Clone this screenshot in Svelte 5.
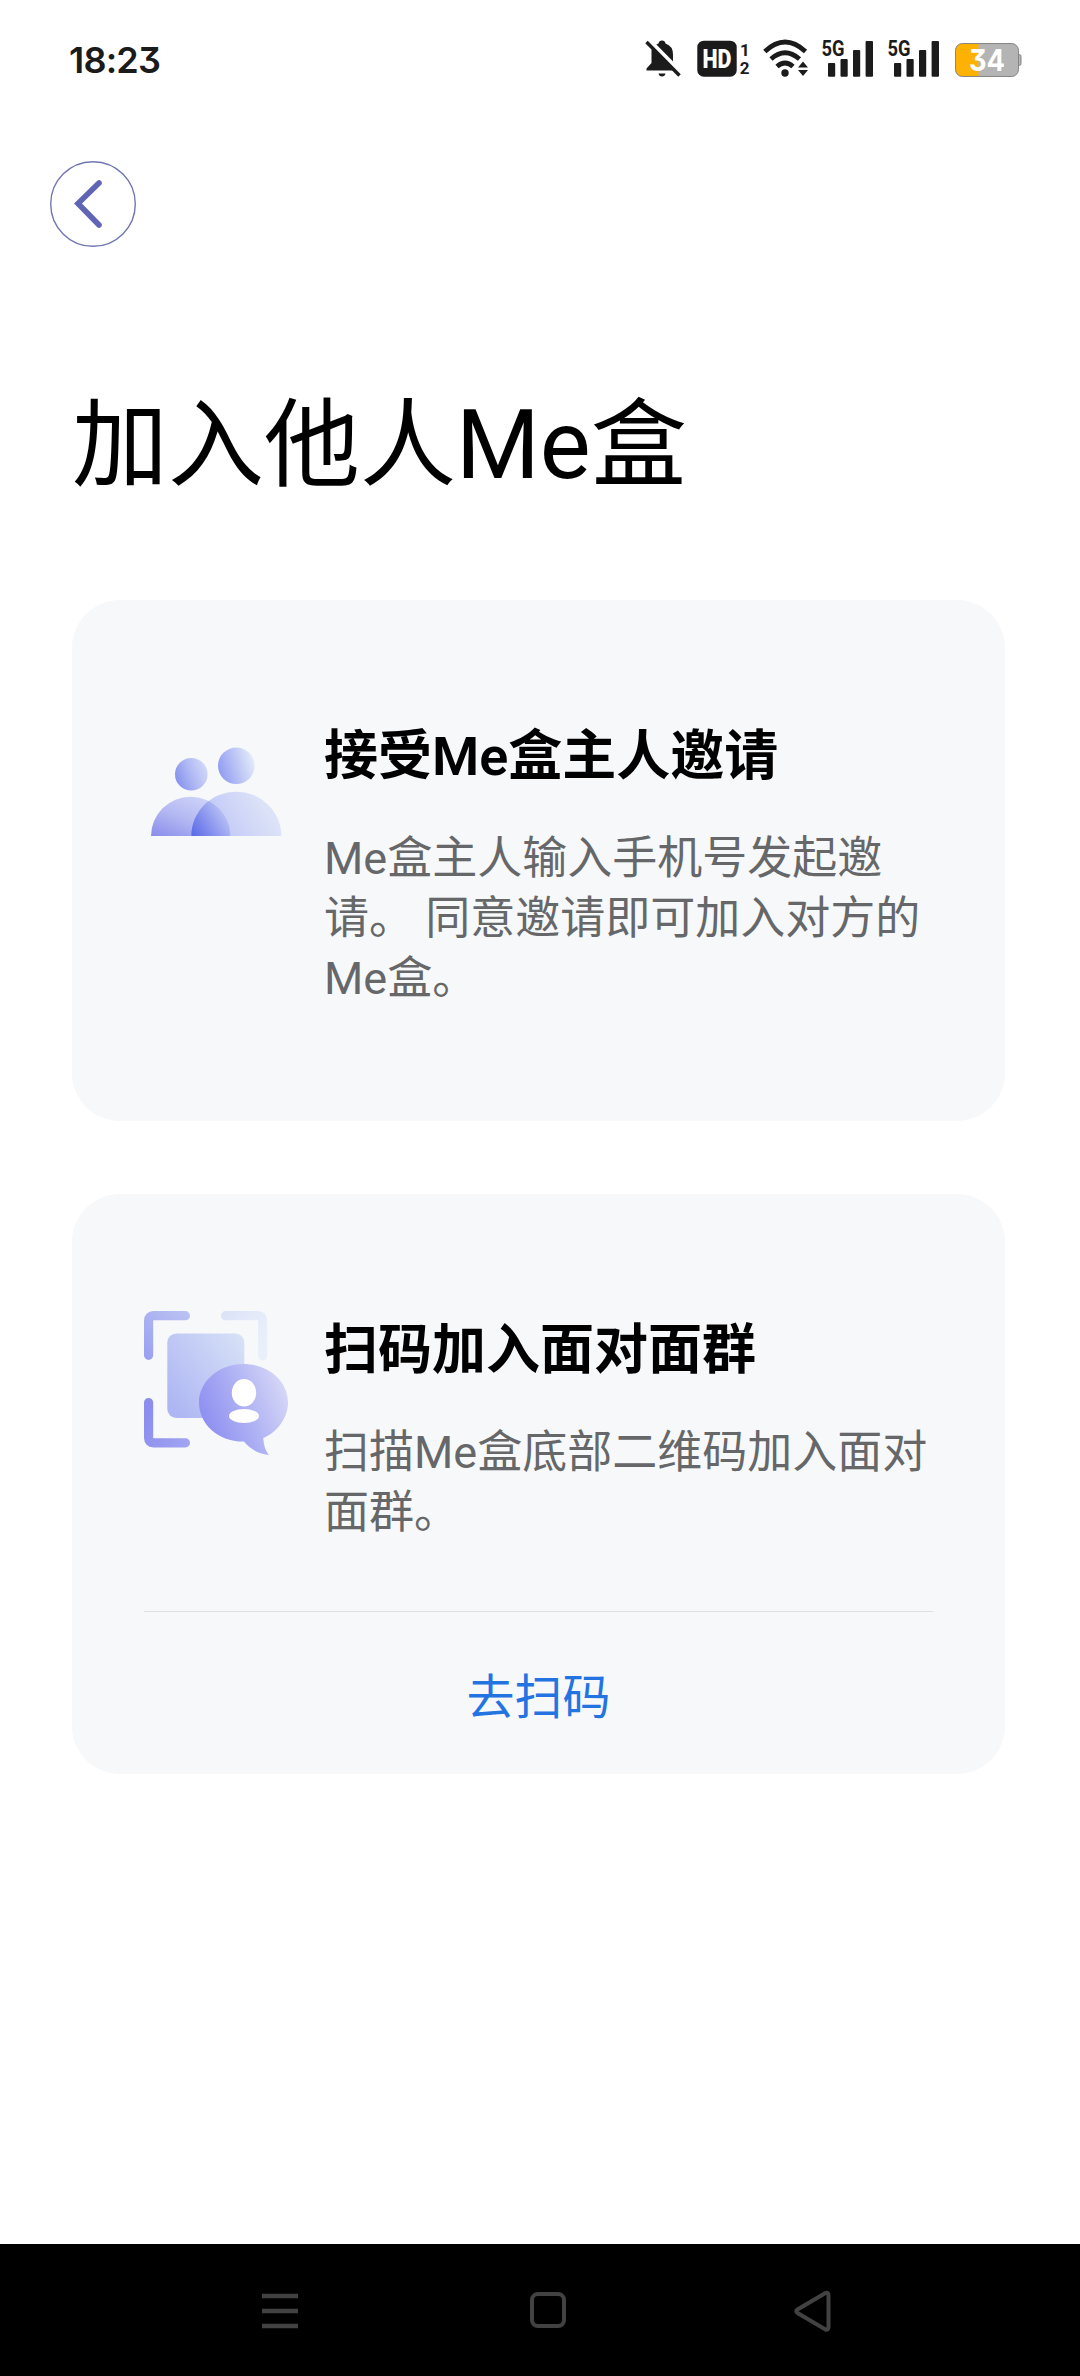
<script lang="ts">
	interface Card {
		icon: 'people' | 'scan';
		title: string;
		text: string;
		action?: string;
	}

	const cards: Card[] = [
		{
			icon: 'people',
			title: '接受Me盒主人邀请',
			text: 'Me盒主人输入手机号发起邀请。 同意邀请即可加入对方的Me盒。'
		},
		{
			icon: 'scan',
			title: '扫码加入面对面群',
			text: '扫描Me盒底部二维码加入面对面群。',
			action: '去扫码'
		}
	];
</script>

{#snippet signal()}
	<svg class="signal" width="52" height="40" viewBox="0 0 52 40">
		<text x="-0.5" y="16.8" textLength="23" lengthAdjust="spacingAndGlyphs">5G</text>
		<rect x="6" y="24" width="7.2" height="13.7" rx="1" />
		<rect x="18.5" y="20" width="7.2" height="17.7" rx="1" />
		<rect x="31" y="11" width="7.2" height="26.7" rx="1" />
		<rect x="43.6" y="2" width="7.4" height="35.7" rx="1" />
	</svg>
{/snippet}

{#snippet peopleIcon()}
	<svg class="card-icon" width="144" height="144" viewBox="0 0 144 144">
		<defs>
			<linearGradient id="p-head1" x1="0" y1="0.7" x2="1" y2="0.3">
				<stop offset="0" stop-color="#8490ee" />
				<stop offset="0.5" stop-color="#b0b9f3" />
				<stop offset="1" stop-color="#d3daf8" />
			</linearGradient>
			<linearGradient id="p-head2" x1="0" y1="0.7" x2="1" y2="0.4">
				<stop offset="0" stop-color="#8f9af1" />
				<stop offset="0.5" stop-color="#b9c2f5" />
				<stop offset="1" stop-color="#e3ebfa" />
			</linearGradient>
			<linearGradient id="p-body1" x1="0" y1="1" x2="0.8" y2="0.1">
				<stop offset="0" stop-color="#898ceb" />
				<stop offset="0.5" stop-color="#b3b8f2" />
				<stop offset="1" stop-color="#cfd5f7" />
			</linearGradient>
			<linearGradient id="p-body2" x1="0" y1="0.9" x2="1" y2="0.6">
				<stop offset="0" stop-color="#a9b3f4" />
				<stop offset="0.45" stop-color="#c9d0f7" />
				<stop offset="1" stop-color="#e0e6f7" />
			</linearGradient>
			<linearGradient id="p-over" gradientUnits="userSpaceOnUse" x1="47" y1="114" x2="82" y2="92">
				<stop offset="0" stop-color="#5f6de7" />
				<stop offset="0.5" stop-color="#8e99ef" />
				<stop offset="1" stop-color="#c0c8f6" />
			</linearGradient>
			<clipPath id="p-clip">
				<path d="M47.3 119a45 44.3 0 0 1 90 0z" />
			</clipPath>
		</defs>
		<circle cx="47.3" cy="57.3" r="16.3" fill="url(#p-head1)" />
		<circle cx="92.3" cy="48.8" r="18.3" fill="url(#p-head2)" />
		<path d="M7 119a39.7 39.3 0 0 1 79.4 0z" fill="url(#p-body1)" />
		<path d="M47.3 119a45 44.3 0 0 1 90 0z" fill="url(#p-body2)" />
		<path d="M7 119a39.7 39.3 0 0 1 79.4 0z" fill="url(#p-over)" clip-path="url(#p-clip)" />
	</svg>
{/snippet}

{#snippet scanIcon()}
	<svg class="card-icon" width="144" height="144" viewBox="0 0 144 144">
		<defs>
			<linearGradient id="s-tl" gradientUnits="userSpaceOnUse" x1="0" y1="48" x2="46" y2="0">
				<stop offset="0" stop-color="#999ff0" />
				<stop offset="1" stop-color="#bcc4f3" />
			</linearGradient>
			<linearGradient id="s-tr" gradientUnits="userSpaceOnUse" x1="77" y1="0" x2="123" y2="30">
				<stop offset="0" stop-color="#dbe2f7" />
				<stop offset="1" stop-color="#eaf0fa" />
			</linearGradient>
			<linearGradient id="s-bl" gradientUnits="userSpaceOnUse" x1="0" y1="110" x2="46" y2="132">
				<stop offset="0" stop-color="#8b8eed" />
				<stop offset="1" stop-color="#a3a4f2" />
			</linearGradient>
			<linearGradient id="s-page" x1="0" y1="0.8" x2="1" y2="0">
				<stop offset="0" stop-color="#aeb6f3" />
				<stop offset="1" stop-color="#d8e3f7" />
			</linearGradient>
			<linearGradient id="s-bubble" x1="0.05" y1="0.75" x2="1" y2="0.35">
				<stop offset="0" stop-color="#8b8cf1" />
				<stop offset="0.5" stop-color="#adb0f3" />
				<stop offset="1" stop-color="#d5d6f7" />
			</linearGradient>
		</defs>
		<g fill="none" stroke-width="9.2" stroke-linecap="round">
			<path d="M4.6 44.3V9.7Q4.6 4.7 9.6 4.7H41.4" stroke="url(#s-tl)" />
			<path d="M81.6 4.7H113.7Q118.7 4.7 118.7 9.7V45" stroke="url(#s-tr)" />
			<path d="M4.6 91.6V126.8Q4.6 131.8 9.6 131.8H41.4" stroke="url(#s-bl)" />
		</g>
		<rect x="23.3" y="22.4" width="77" height="84.6" rx="9" fill="url(#s-page)" />
		<path
			d="M99.5 53C124 53 144 70 144 91.5C144 106 134 121 119.3 127C119.5 133 121 139 124.7 144C114 142.5 106 138 100 130.6C74 131 55 113 55 91.5C55 70 75 53 99.5 53z"
			fill="url(#s-bubble)"
		/>
		<ellipse cx="100" cy="81.7" rx="12.2" ry="13.8" fill="#fff" />
		<ellipse cx="100" cy="105" rx="15" ry="7" fill="#fff" />
	</svg>
{/snippet}

<div class="screen">
	<header class="status-bar">
		<span class="time">18:23</span>
		<div class="status-icons">
			<svg class="bell" width="38" height="40" viewBox="0 0 38 40">
				<path
					d="M6.5 11Q8 6.5 13.5 4.5Q14 1.5 17 1.5Q20 1.5 20.5 4.5Q28 7 28 15.5V23L33 29V31.5H1.5V29.5L6.5 24z"
				/>
				<path d="M13.5 34.5H20.5Q20 37.5 17 37.5Q14 37.5 13.5 34.5z" />
				<path d="M3.5 0.5L37 34.5" stroke="#fff" stroke-width="4" />
				<path d="M1.5 3L34.5 36.5" stroke="#1b1b1b" stroke-width="3.4" />
			</svg>
			<svg class="hd" width="54" height="40" viewBox="0 0 54 40">
				<rect x="0.3" y="1.7" width="39.4" height="36" rx="6.5" />
				<text class="hd-text" x="5.5" y="29" textLength="29" lengthAdjust="spacingAndGlyphs">HD</text>
				<text class="sim" x="43" y="16.5">1</text>
				<text class="sim" x="42.8" y="34.5">2</text>
			</svg>
			<svg class="wifi" width="46" height="40" viewBox="0 0 46 40">
				<g fill="none" stroke="#1b1b1b" stroke-width="4.8">
					<path d="M1.8 12.5Q22 -6.5 42.5 12.5" />
					<path d="M8 20Q22 7.5 36.5 20" />
					<path d="M14 27.5Q22 20.5 30 27.5" />
				</g>
				<circle cx="22" cy="34" r="3.7" />
				<path d="M40 22.5L45 28.5H35z M40 37L45 31H35z" />
			</svg>
			{@render signal()}
			{@render signal()}
			<svg class="battery" width="68" height="40" viewBox="0 0 68 40">
				<defs>
					<clipPath id="battery-clip">
						<rect x="0.5" y="4.5" width="63" height="33" rx="7" />
					</clipPath>
				</defs>
				<path d="M63 15.5H64.5Q66 15.5 66 17.5V24.5Q66 26.5 64.5 26.5H63z" fill="#b4b4b4" stroke="#858585" />
				<g clip-path="url(#battery-clip)">
					<rect width="68" height="40" fill="#b4b4b4" />
					<rect width="23.5" height="40" fill="#fcb103" />
				</g>
				<rect x="0.5" y="4.5" width="63" height="33" rx="7" fill="none" stroke="#858585" />
				<text x="14" y="32" textLength="36" lengthAdjust="spacingAndGlyphs">34</text>
			</svg>
		</div>
	</header>

	<main>
		<button class="back" aria-label="返回">
			<svg width="86" height="86" viewBox="0 0 86 86">
				<circle cx="43" cy="43" r="42.3" fill="#fff" stroke="#7276b0" stroke-width="1.4" />
				<path d="M49 22L28 42.5L49 64" fill="none" stroke="#6064b5" stroke-width="5.6" stroke-linecap="round" />
			</svg>
		</button>

		<h1>加入他人Me盒</h1>

		<div class="cards">
			{#each cards as card}
				<section class="card">
					<div class="card-main">
						{#if card.icon === 'people'}
							{@render peopleIcon()}
						{:else}
							{@render scanIcon()}
						{/if}
						<div class="card-body">
							<h2>{card.title}</h2>
							<p>{card.text}</p>
						</div>
					</div>
					{#if card.action}
						<button class="action">{card.action}</button>
					{/if}
				</section>
			{/each}
		</div>
	</main>

	<nav>
		<svg width="36" height="40" viewBox="0 0 36 40">
			<path d="M0 4H36M0 19H36M0 34H36" stroke-width="4.6" />
		</svg>
		<svg class="home" width="36" height="40" viewBox="0 0 36 40">
			<rect x="2" y="2" width="32" height="32" rx="6" />
		</svg>
		<svg width="37" height="40" viewBox="0 0 37 40">
			<path d="M31.5 1L3.5 17.5Q1 19.2 3.5 21L31.5 37.5Q34.5 38.5 34.5 35V3.5Q34.5 0 31.5 1z" />
		</svg>
	</nav>
</div>

<style>
	:global(body) {
		background: #fff;
	}

	.screen {
		display: flex;
		flex-direction: column;
		width: 1080px;
		height: 2376px;
		background: #fff;
		color: #000;
		font-family: Roboto, 'Noto Sans CJK SC', sans-serif;
	}

	.status-bar {
		display: flex;
		justify-content: space-between;
		height: 121px;
		padding: 39px 57px 0 69px;
		box-sizing: border-box;
	}

	.time {
		font-family: Inter, sans-serif;
		font-size: 36px;
		font-weight: 600;
		line-height: 43px;
		letter-spacing: -0.8px;
		font-feature-settings: 'cv09';
		color: #1b1b1b;
	}

	.status-icons {
		display: flex;

		svg {
			display: block;
			fill: #1b1b1b;
			overflow: visible;
		}

		text {
			font-family: Roboto, sans-serif;
			font-weight: 700;
		}

		.hd {
			margin-left: 14px;
		}

		.wifi {
			margin-left: 12px;
		}

		.signal {
			margin-left: 14px;

			text {
				font-size: 22px;
			}
		}

		.wifi + .signal {
			margin-left: 13px;
		}

		.battery {
			margin-left: 15px;

			text {
				font-family: Inter, sans-serif;
				font-size: 30px;
				fill: #fff;
				font-feature-settings: 'cv09';
			}
		}

		.hd-text {
			font-size: 25px;
			font-weight: 900;
			fill: #fff;
		}

		.sim {
			font-size: 17px;
		}
	}

	main {
		flex: 1;
		padding: 40px 75px 0 72px;
	}

	button {
		display: block;
		padding: 0;
		border: 0;
		background: none;
		font-family: inherit;
	}

	.back {
		margin-left: -22px;

		svg {
			display: block;
		}
	}

	h1 {
		margin: 135px 0 92px;
		font-size: 96px;
		font-weight: 400;
		line-height: 126px;
	}

	.cards {
		display: grid;
		gap: 73px;
	}

	.card {
		padding: 117px 72px 0;
		border-radius: 48px;
		background: #f7f8fa;
	}

	.card-main {
		display: flex;
		gap: 36px;
		padding-bottom: 112px;
	}

	.card-main:not(:last-child) {
		padding-bottom: 68px;
	}

	.card-icon {
		flex: none;
	}

	.card-body {
		padding-top: 1px;
	}

	h2 {
		margin: 0 0 33px;
		font-size: 54px;
		font-weight: 600;
		line-height: 78px;
	}

	p {
		margin: 0;
		font-size: 45px;
		line-height: 60px;
		color: #666769;
	}

	.action {
		width: 100%;
		height: 163px;
		border-top: 1px solid #dfe0e2;
		font-size: 48px;
		color: #2374e1;
	}

	nav {
		display: flex;
		justify-content: space-between;
		height: 132px;
		padding: 48px 249px 0 262px;
		box-sizing: border-box;
		background: #000;

		svg {
			fill: none;
			stroke: #424242;
			stroke-width: 4;
			overflow: visible;
		}

		.home {
			margin-left: 3px;
		}
	}
</style>
